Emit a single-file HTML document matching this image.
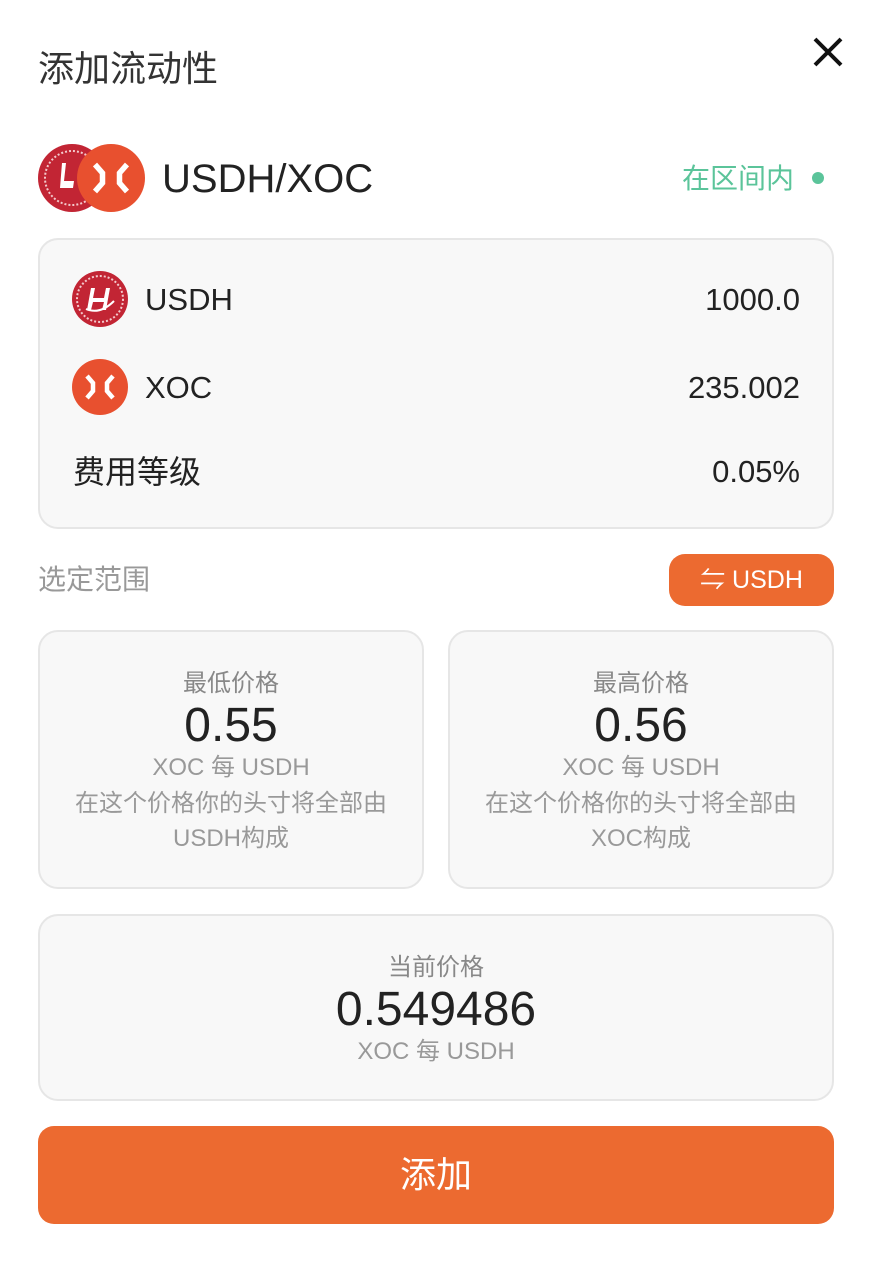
<!DOCTYPE html>
<html><head><meta charset="utf-8"><style>
*{margin:0;padding:0;box-sizing:border-box}
body{width:874px;height:1266px;background:#fff;position:relative;font-family:"Liberation Sans","Noto Sans CJK SC",sans-serif;overflow:hidden}
.a{position:absolute;white-space:nowrap}
.card{position:absolute;background:#f8f8f8;border:2px solid #e6e6e6;border-radius:20px}
.c{position:absolute;left:0;right:0;text-align:center;white-space:nowrap}
.lab{font-size:24px;color:#888;line-height:30px}
.sub{font-size:24px;color:#999;line-height:30px}
.big{font-size:48px;color:#222;line-height:54px}
.v{font-size:31px;color:#222;line-height:36px}
</style></head><body>
<div class="a" style="left:38px;top:47px;font-size:36px;color:#333;line-height:44px">添加流动性</div>
<svg class="a" style="left:810px;top:34px" width="36" height="36" viewBox="0 0 36 36"><path d="M5 5L31 31M31 5L5 31" stroke="#111" stroke-width="4"/></svg>

<svg class="a" style="left:36px;top:141px" width="112" height="74" viewBox="0 0 112 74">
<circle cx="36" cy="37" r="34" fill="#C22534"/>
<circle cx="36" cy="37" r="27" fill="none" stroke="#f3c9cc" stroke-width="2" stroke-dasharray="2 2"/>
<path d="M26 22L30 22L28 40L38 40L37 47L24 47Z" fill="#fff"/>
<circle cx="75" cy="37" r="34" fill="#E8502F"/>
<path d="M59 23.5L66.5 32V42L59 50.5M91 23.5L83.5 32V42L91 50.5" fill="none" stroke="#fff" stroke-width="5.5"/>
</svg>
<div class="a" style="left:162px;top:156px;font-size:40px;color:#222;line-height:46px">USDH/XOC</div>
<div class="a" style="left:682px;top:162px;font-size:28px;color:#5BC49A;line-height:34px">在区间内</div>
<div class="a" style="left:812px;top:172px;width:12px;height:12px;border-radius:6px;background:#5BC49A"></div>

<div class="card" style="left:38px;top:238px;width:796px;height:291px"></div>
<svg class="a" style="left:72px;top:271px" width="56" height="56" viewBox="0 0 56 56">
<circle cx="28" cy="28" r="28" fill="#C22534"/>
<circle cx="28" cy="28" r="23" fill="none" stroke="#f3c9cc" stroke-width="2" stroke-dasharray="2 2"/>
<path d="M19 17L23 17L21 27L32 27L34 17L38 17L34 39L30 39L32 31L21 31L19 39L15 39Z" fill="#fff"/>
<path d="M14 38Q28 44 42 30" fill="none" stroke="#fff" stroke-width="2"/>
</svg>
<div class="a v" style="left:145px;top:282px">USDH</div>
<div class="a v" style="right:74px;top:282px">1000.0</div>
<svg class="a" style="left:72px;top:359px" width="56" height="56" viewBox="0 0 56 56">
<circle cx="28" cy="28" r="28" fill="#E8502F"/>
<path d="M15 17L21 24V32L15 39M41 17L35 24V32L41 39" fill="none" stroke="#fff" stroke-width="4.5"/>
</svg>
<div class="a v" style="left:145px;top:370px">XOC</div>
<div class="a v" style="right:74px;top:370px">235.002</div>
<div class="a" style="left:73px;top:453px;font-size:32px;color:#222;line-height:38px">费用等级</div>
<div class="a v" style="right:74px;top:454px">0.05%</div>

<div class="a" style="left:38px;top:563px;font-size:28px;color:#999;line-height:34px">选定范围</div>
<div class="a" style="left:669px;top:554px;width:165px;height:52px;border-radius:16px;background:#EC6A30;color:#fff;font-size:25px;line-height:52px;text-align:center">⇋ USDH</div>

<div class="card" style="left:38px;top:630px;width:386px;height:259px">
<div class="c lab" style="top:37px">最低价格</div>
<div class="c big" style="top:67px">0.55</div>
<div class="c sub" style="top:121px">XOC 每 USDH</div>
<div class="c sub" style="top:157px">在这个价格你的头寸将全部由</div>
<div class="c sub" style="top:192px">USDH构成</div>
</div>
<div class="card" style="left:448px;top:630px;width:386px;height:259px">
<div class="c lab" style="top:37px">最高价格</div>
<div class="c big" style="top:67px">0.56</div>
<div class="c sub" style="top:121px">XOC 每 USDH</div>
<div class="c sub" style="top:157px">在这个价格你的头寸将全部由</div>
<div class="c sub" style="top:192px">XOC构成</div>
</div>
<div class="card" style="left:38px;top:914px;width:796px;height:187px">
<div class="c lab" style="top:37px">当前价格</div>
<div class="c big" style="top:67px">0.549486</div>
<div class="c sub" style="top:121px">XOC 每 USDH</div>
</div>
<div class="a" style="left:38px;top:1126px;width:796px;height:98px;border-radius:16px;background:#EC6A30;color:#fff;font-size:36px;line-height:98px;text-align:center">添加</div>
</body></html>
